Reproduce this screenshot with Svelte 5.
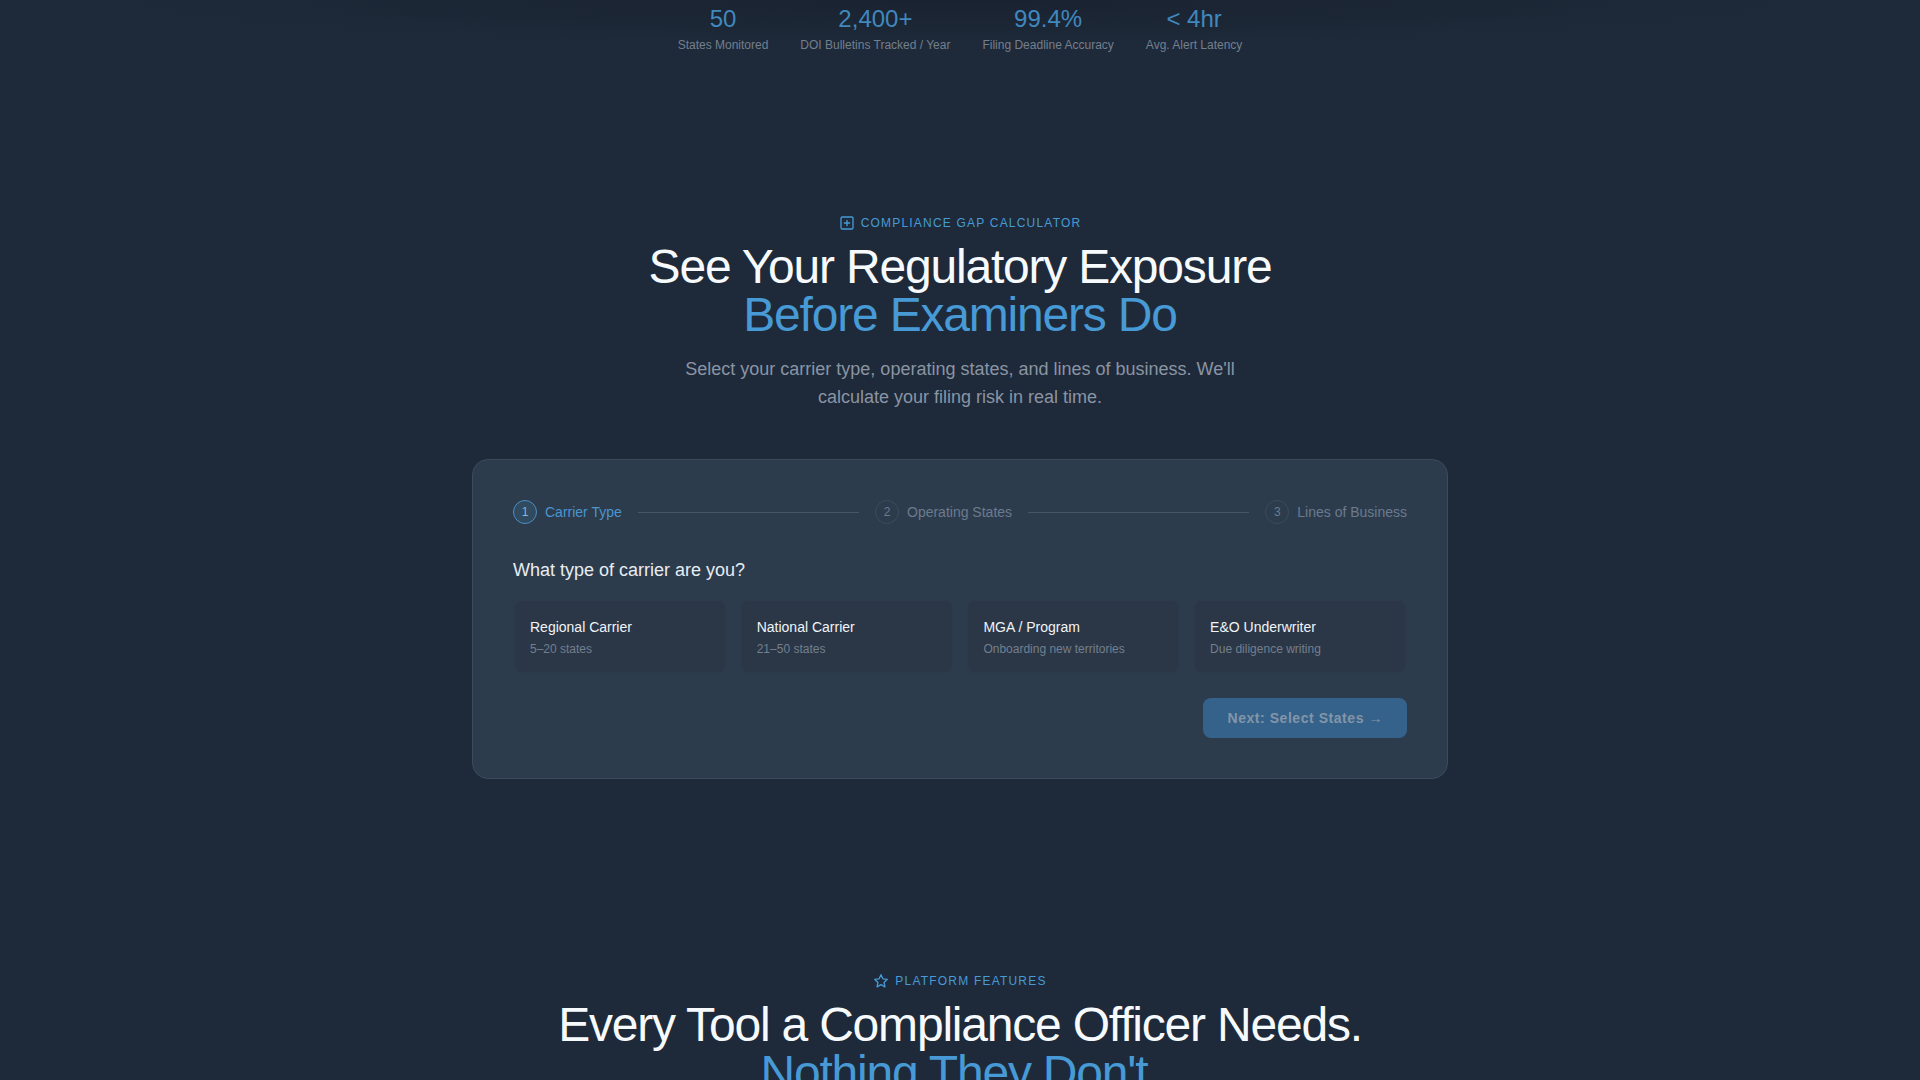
<script lang="ts">
    const stats = [
        { value: "50", label: "States Monitored" },
        { value: "2,400+", label: "DOI Bulletins Tracked / Year" },
        { value: "99.4%", label: "Filing Deadline Accuracy" },
        { value: "< 4hr", label: "Avg. Alert Latency" },
    ];

    const steps = ["Carrier Type", "Operating States", "Lines of Business"];

    const carriers = [
        { name: "Regional Carrier", note: "5–20 states" },
        { name: "National Carrier", note: "21–50 states" },
        { name: "MGA / Program", note: "Onboarding new territories" },
        { name: "E&O Underwriter", note: "Due diligence writing" },
    ];
</script>

<div class="page">
    <div class="stats">
        {#each stats as stat}
            <div class="stat">
                <div class="stat-value">{stat.value}</div>
                <div class="stat-label">{stat.label}</div>
            </div>
        {/each}
    </div>

    <section class="section">
        <div class="eyebrow">
            <svg viewBox="0 0 24 24" width="16" height="16" fill="none" stroke="currentColor" stroke-width="2" stroke-linecap="round" stroke-linejoin="round">
                <rect x="3" y="3" width="18" height="18" rx="2"></rect>
                <path d="M12 8v8M8 12h8"></path>
            </svg>
            Compliance Gap Calculator
        </div>
        <h2>See Your Regulatory Exposure<br /><span>Before Examiners Do</span></h2>
        <p class="lead">Select your carrier type, operating states, and lines of business. We'll calculate your filing risk in real time.</p>

        <div class="card">
            <div class="stepper">
                {#each steps as step, i}
                    {#if i > 0}
                        <div class="step-line"></div>
                    {/if}
                    <div class="step" class:active={i === 0}>
                        <span class="step-num">{i + 1}</span>
                        <span>{step}</span>
                    </div>
                {/each}
            </div>

            <div class="question">What type of carrier are you?</div>

            <div class="options">
                {#each carriers as carrier}
                    <div class="option">
                        <div class="option-name">{carrier.name}</div>
                        <div class="option-note">{carrier.note}</div>
                    </div>
                {/each}
            </div>

            <div class="actions">
                <button class="next" disabled>Next: Select States <span>→</span></button>
            </div>
        </div>
    </section>

    <section class="section">
        <div class="eyebrow">
            <svg viewBox="0 0 24 24" width="16" height="16" fill="none" stroke="currentColor" stroke-width="2" stroke-linecap="round" stroke-linejoin="round">
                <path d="M12 2.5l2.9 6.2 6.6.8-4.9 4.6 1.3 6.7-5.9-3.3-5.9 3.3 1.3-6.7-4.9-4.6 6.6-.8z"></path>
            </svg>
            Platform Features
        </div>
        <h2>Every Tool a Compliance Officer Needs.<br /><span>Nothing They Don't.</span></h2>
    </section>
</div>

<style>
    :global(body) {
        margin: 0;
        background: #1e2a3a;
    }

    .page {
        height: 1080px;
        overflow: hidden;
        background: #1e2a3a;
        color: #f7fafc;
        font-family: "Liberation Sans", Arial, sans-serif;
        line-height: 1.6;
    }

    .stats {
        display: flex;
        justify-content: center;
        gap: 32px;
        padding-bottom: 65px;
        background: radial-gradient(ellipse 900px 48px at 50% 0, #192230, rgba(30, 42, 58, 0));
    }

    .stat {
        text-align: center;
    }

    .stat-value {
        font-size: 24px;
        line-height: 38px;
        color: #479ad5;
        opacity: 0.85;
    }

    .stat-label {
        font-size: 12px;
        line-height: 15px;
        color: #737f8d;
    }

    .section {
        display: flex;
        flex-direction: column;
        align-items: center;
        padding: 96px 0 97px;
    }

    .eyebrow {
        display: flex;
        align-items: center;
        gap: 6px;
        font-size: 12px;
        line-height: 18px;
        letter-spacing: 1.2px;
        text-transform: uppercase;
        color: #479ad5;
        margin-bottom: 11px;
    }

    h2 {
        margin: 0 0 16px;
        font-size: 48px;
        font-weight: 400;
        line-height: 48px;
        letter-spacing: -1.2px;
        text-align: center;
        color: #f7fafc;
    }

    h2 span {
        color: #479ad5;
    }

    .lead {
        margin: 0 0 48px;
        max-width: 580px;
        font-size: 18px;
        line-height: 28px;
        text-align: center;
        color: #8a94a3;
    }

    .card {
        box-sizing: border-box;
        width: 976px;
        padding: 40px;
        background: #2d3c4c;
        border: 1px solid #3c4a5c;
        border-radius: 16px;
    }

    .stepper {
        display: flex;
        align-items: center;
        gap: 16px;
        margin-bottom: 32px;
    }

    .step {
        display: flex;
        align-items: center;
        gap: 8px;
        font-size: 14px;
        line-height: 24px;
        color: #6b7a8e;
    }

    .step.active {
        color: #4a95cf;
    }

    .step-num {
        box-sizing: border-box;
        width: 24px;
        height: 24px;
        display: flex;
        align-items: center;
        justify-content: center;
        font-size: 12px;
        border: 1.5px solid #3c4b5e;
        border-radius: 50%;
    }

    .step.active .step-num {
        border-color: #4a8fc4;
        background: rgba(66, 153, 214, 0.15);
        color: #83b6dd;
    }

    .step-line {
        flex: 1;
        height: 1px;
        background: #465568;
    }

    .question {
        font-size: 18px;
        color: #e8edf3;
        margin-bottom: 14px;
    }

    .options {
        display: grid;
        grid-template-columns: repeat(4, 1fr);
        gap: 12.8px;
        margin-bottom: 24px;
    }

    .option {
        padding: 15px 15px 13px;
        background: #2b3747;
        border: 2px solid #2c3a4b;
        border-radius: 10px;
    }

    .option-name {
        font-size: 14px;
        color: #f0f4f8;
    }

    .option-note {
        margin-top: 2px;
        font-size: 12px;
        color: #737f8d;
    }

    .actions {
        display: flex;
        justify-content: flex-end;
    }

    .next {
        height: 40px;
        padding: 0 24px;
        border: none;
        border-radius: 8px;
        background: #35628a;
        color: #8495a8;
        font-family: inherit;
        font-size: 14px;
        font-weight: 700;
        letter-spacing: 0.55px;
    }
</style>
